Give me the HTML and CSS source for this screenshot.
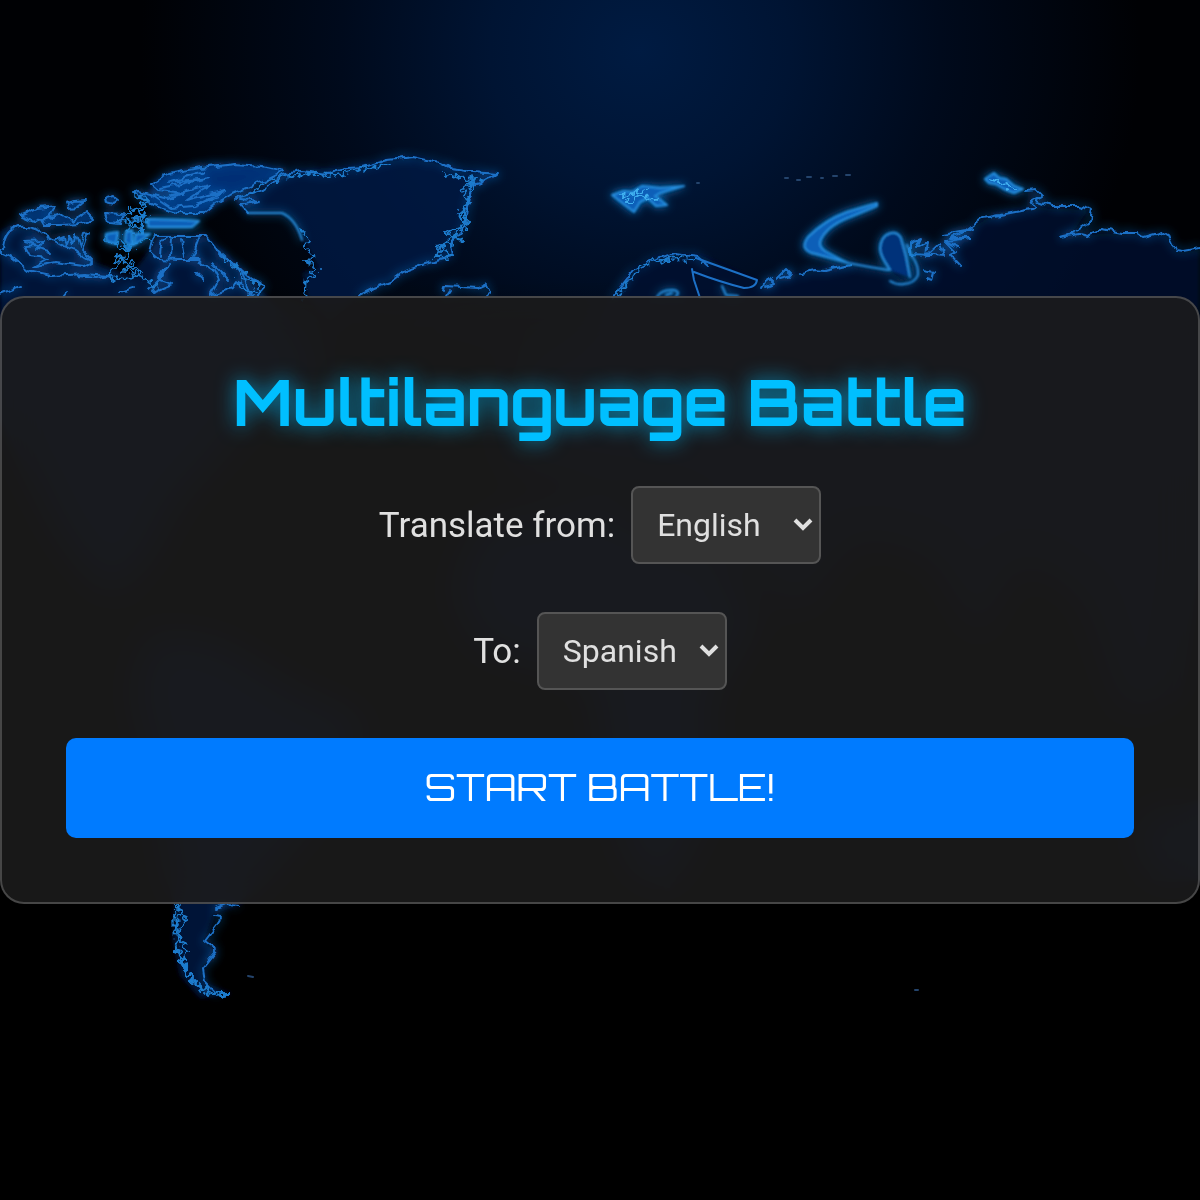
FILE: index.html
```
<!DOCTYPE html>
<html lang="en">

<head>
    <meta charset="UTF-8">
    <meta name="viewport" content="width=device-width, initial-scale=1.0">
    <title>Multilanguage Battle</title>
    <link rel="stylesheet" href="styles.css">
</head>

<body>
<svg class="map" viewBox="0 0 1200 1200" preserveAspectRatio="xMidYMid slice" aria-hidden="true">
    <defs>
        <radialGradient id="sky" gradientUnits="userSpaceOnUse" cx="0" cy="0" r="1" gradientTransform="translate(640 50) scale(500 470)">
            <stop offset="0" stop-color="#001b42"/>
            <stop offset=".3" stop-color="#001433"/>
            <stop offset=".6" stop-color="#000a1c"/>
            <stop offset="1" stop-color="#000104"/>
        </radialGradient>
        <linearGradient id="fade" x1="0" y1="0" x2="0" y2="1">
            <stop offset=".5" stop-color="#000" stop-opacity="0"/>
            <stop offset=".9" stop-color="#000"/>
        </linearGradient>
        <filter id="coast" x="-5%" y="-10%" width="110%" height="120%">
            <feTurbulence type="fractalNoise" baseFrequency=".13" numOctaves="1" seed="4" result="noise"/>
            <feDisplacementMap in="SourceGraphic" in2="noise" scale="8" xChannelSelector="R" yChannelSelector="G" result="moved"/>
            <feGaussianBlur in="moved" stdDeviation=".6" result="line"/>
            <feGaussianBlur in="moved" stdDeviation="5" result="glow"/>
            <feMerge><feMergeNode in="glow"/><feMergeNode in="line"/></feMerge>
        </filter>
        <filter id="rough" x="-10%" y="-20%" width="120%" height="140%">
            <feTurbulence type="fractalNoise" baseFrequency=".2" numOctaves="1" seed="9" result="noise"/>
            <feDisplacementMap in="SourceGraphic" in2="noise" scale="16" xChannelSelector="R" yChannelSelector="G" result="moved"/>
            <feGaussianBlur in="moved" stdDeviation=".6"/>
        </filter>
        <filter id="glow" x="-10%" y="-20%" width="120%" height="140%">
            <feGaussianBlur in="SourceGraphic" stdDeviation="5" result="b"/>
            <feGaussianBlur in="SourceGraphic" stdDeviation=".8" result="line"/>
            <feMerge><feMergeNode in="b"/><feMergeNode in="line"/></feMerge>
        </filter>
        <filter id="soft">
            <feGaussianBlur stdDeviation="2"/>
        </filter>
    </defs>
    <rect width="1200" height="1200" fill="url(#sky)"/>
    <rect width="1200" height="560" y="0" fill="url(#fade)"/>
    <rect width="1200" height="640" y="560" fill="#000"/>

    <!-- land -->
    <g class="land" filter="url(#soft)">
        <path d="M0 232L12 226L34 229L52 242L74 240L88 253L92 262L130 276L150 250L160 236L206 236L230 258L262 292L300 330L330 380L250 420L210 470L180 500L150 560L110 600L60 540L30 480L0 420V262Z"/>
        <path d="M151 184L168 174L200 168L235 164L262 166L284 171L246 188L215 204L204 213L176 213L150 203Z"/>
        <path d="M237 198L263 190L283 175L300 171L347 168L387 160L413 157L440 163L452 169L497 174L472 185L467 207L463 227L450 243L452 257L403 272L390 282L358 296L330 320L307 296L303 273L318 267L302 237L293 220L282 213L248 213L242 207Z"/>
        <path d="M150 630L220 640L300 690L370 720L330 800L290 850L240 904L215 912L205 942L217 950L203 968L208 985L232 994L200 998L180 975L173 940L174 904L150 760L130 690Z"/>
        <path class="deep" d="M614 296L632 270L660 255L700 255L757 280L762 284L800 273L848 263L888 269L905 282L914 262L956 236L1000 212L1035 208L1088 210L1070 236L1140 232L1168 235L1178 252L1200 250V560L1180 700L1120 720L1080 600L1020 560L980 650L930 560L860 540L800 620L740 560L700 560L690 500L620 490L500 470L520 360L580 340Z"/>
        <path d="M480 520L600 500L720 560L760 620L710 700L720 790L670 890L630 870L600 760L590 680L480 650L450 590Z"/>
        <path d="M1130 820L1200 800V880H1150Z"/>
    </g>

    <!-- coastlines -->
    <g class="coast" filter="url(#coast)">
        <path d="M3 250Q4 232 16 227Q35 225 46 236Q60 246 76 251Q84 258 92 262L84 266L55 262L32 267L48 258L30 256L25 246L38 245L24 241L44 240L36 249L50 252"/>
        <path d="M0 252L12 258L28 271L52 276L84 274L110 276L96 278L78 276"/>
        <path d="M56 240L64 237L66 245L70 236L73 246L76 235L80 247L84 233L88 232L82 250L92 260"/>
        <path class="isle" d="M20 216L38 208L56 206L50 216L34 222ZM42 220L60 214L72 222L86 212L94 220L80 224L60 225L45 225Z"/>
        <path class="isle" d="M66 203L74 201L86 200L78 207L68 208ZM105 197L112 195L119 200L114 204L106 202ZM105 213L124 214L120 223L108 222Z"/>
        <path class="isle" d="M151 184L168 174L200 168L235 164L262 166L284 171L268 179L246 188L232 194L215 204L204 213L176 213L162 209L150 203L134 193L138 191L168 199L184 193L158 190Z"/>
        <path d="M160 188L210 178L168 182L205 171M172 195L210 185L186 200L226 190L194 206L218 197M152 196L170 208L194 206"/>
        <path d="M154 236L190 236L206 236L217 250L230 261L252 280L265 286L256 296L236 282L232 288L210 296L219 280L214 270L198 260L178 260L158 259L150 252Z"/>
        <path d="M166 237L161 244L160 256M172 238L171 258M181 240L184 257M199 238L192 258M220 254L242 272L250 294M212 264L228 280M168 264L160 280L150 290M165 267L158 279L172 284L153 292"/>
        <path d="M0 294L20 286M62 296L66 291M120 292L132 288M196 273L204 280"/>
        <path d="M237 198L263 190L283 175L300 171L327 174L347 168L363 167L387 160L413 157L440 163L452 169L472 172L497 174L480 183L472 185L467 207L465 227L450 243L452 257L425 264L403 272L390 282L374 288L358 296"/>
        <path d="M240 199L260 201L240 205L247 213"/>
        <path d="M444 291L445 286L478 288L487 284L490 293L484 298M446 296L450 290"/>
        <path d="M614 298L622 285L634 270L652 260L676 254L698 257L708 266"/>
        <path d="M762 288L768 278L774 284L766 287M780 278L792 275L786 269L776 279M800 273L815 270L824 271L850 265"/>
        <path d="M1025 191L1036 190L1042 196L1032 201L1036 208L1000 215L982 218L966 230L943 234L972 229L948 238L972 238L945 241L958 247"/>
        <path d="M1036 201L1050 206L1078 206L1092 210L1090 222L1072 234L1060 237L1080 234L1088 236L1102 229L1122 233L1138 233L1144 237L1162 232L1170 237L1176 250L1184 251L1200 248"/>
        <path d="M910 243L920 239L916 248L928 242L926 256L940 243L944 256L932 255L910 254ZM946 242L956 252L950 255L960 266M924 270L934 272L932 280L926 278"/>
        <path d="M216 908L226 904L240 905M214 916L222 917L217 925L205 941L217 950L203 968L205 982L216 994"/>
    </g>

    <!-- broken fjord lines -->
    <g class="fjords" filter="url(#rough)">
        <path d="M300 228L308 240L304 246L314 254L307 262L318 270L306 279L304 298"/>
        <path d="M472 180L470 195L464 212L464 228L450 238L442 248L436 256L452 258"/>
        <path d="M474 182L462 190L470 202L458 213L468 224L446 233L462 239L436 246L452 257"/>
        <path d="M444 172L462 179L480 178L466 184M252 192L266 182L282 178L300 174L330 176L360 169L390 164"/>
        <path d="M105 240L118 236L128 248L142 238L150 240M128 210L129 250M142 204L142 242M120 220L152 222M118 254L132 270L144 278L158 290"/>
        <path d="M112 240L120 250L132 250L118 262L108 276L124 280L140 272L130 262L122 272"/>
        <path d="M135 195L150 202L132 210L148 216L128 222L144 230L126 236"/>
        <path d="M222 258L236 266L244 278L262 286L250 294L236 282"/>
        <path d="M617 296L630 280L640 266L660 260L680 258L700 260"/>
        <path d="M177 904L184 920L177 940L181 962L192 982L210 994L230 994M182 904L176 930L186 950L184 970L202 988L222 996"/>
        <path d="M175 905L176 950L190 976L204 994"/>
    </g>

    <!-- islands -->
    <g class="bright" filter="url(#glow)">
        <path class="lit" d="M612 195L624 191L632 192L642 186L660 188L684 186L660 193L655 196L667 205L656 206L648 198L640 202L634 212Z"/>
        <path class="lit" d="M877 203L847 212Q825 220 808 237Q803 244 805 248Q808 253 816 254L848 263Q834 256 825 251Q819 247 820 242Q822 235 830 228Q839 221 850 217L877 206Z"/>
        <path d="M848 263L870 267L888 270"/>
        <path class="dim" d="M890 270L885 262Q880 254 880 248Q881 237 888 234Q897 230 901 238L906 256L910 277"/>
        <path d="M907 245L912 256Q919 266 918 275Q915 283 904 284Q896 285 890 281"/>
        <path class="lit" d="M985 179L994 173L999 178L1006 179L1014 186L1023 189L1014 193L1004 189L996 184L989 183Z"/>
        <path class="lit" d="M148 219L182 220L199 221L192 227L148 227ZM106 234L118 232L116 244L106 241ZM126 232L132 230V246L125 242ZM136 234L150 234L134 245Z"/>
        <path d="M657 297Q661 289 674 290Q681 292 676 296M666 295L672 293M722 286L726 295L738 296"/>
        <path d="M248 213H282Q296 219 302 240"/>
    </g>
    <g class="coast">
        <path d="M696 258L757 280Q756 288 744 288Q720 282 694 272M692 269L694 280L700 298"/>
    </g>
    <g class="inlets" filter="url(#rough)">
        <path d="M620 195L634 194L646 190M628 202L640 196L656 200M990 179L1004 184L1016 190"/>
    </g>
    <g class="specks">
        <path d="M785 178h3M797 180h3M807 177h4M821 178h2M833 176h4M846 175h4M697 183h2M248 976l5 1M915 990h3"/>
    </g>
</svg>

<main class="container">
    <h1 class="title">Multilanguage Battle</h1>
    <form class="setup">
        <div class="field">
            <label for="from">Translate from:</label>
            <span class="select-wrapper">
                <select id="from">
                    <option>English</option>
                    <option>Spanish</option>
                </select>
                <svg class="arrow" viewBox="0 0 20 14" aria-hidden="true"><path d="M2 3L10 11L18 3"/></svg>
            </span>
        </div>
        <div class="field">
            <label for="to">To:</label>
            <span class="select-wrapper">
                <select id="to">
                    <option>Spanish</option>
                    <option>English</option>
                </select>
                <svg class="arrow" viewBox="0 0 20 14" aria-hidden="true"><path d="M2 3L10 11L18 3"/></svg>
            </span>
        </div>
        <button class="start" type="button">START BATTLE!</button>
    </form>
</main>
</body>

</html>
```
FILE: styles.css
```
* {
    box-sizing: border-box;
}

body {
    margin: 0;
    min-height: 100vh;
    display: flex;
    align-items: center;
    justify-content: center;
    background-color: #000;
    color: #e0e0e0;
    font-family: Roboto, sans-serif;
}

.map {
    position: fixed;
    top: 0;
    left: 0;
    width: 100%;
    height: 100%;
    fill: none;
    stroke-linejoin: round;
    stroke-linecap: round;
}

.land {
    fill: #001544;
    fill-opacity: .8;
}

.land .deep {
    fill: #001030;
}

.coast {
    stroke: #1c70c6;
    stroke-width: 2;
}

.coast .isle {
    fill: #08398a;
    fill-opacity: .5;
}

.fjords {
    stroke: #1f7ccd;
    stroke-width: 2;
}

.bright {
    stroke: #2590e0;
    stroke-width: 2;
}

.bright .lit {
    fill: #0a5fb8;
}

.bright .dim {
    fill: #04307a;
}

.inlets {
    stroke: #3fb0f0;
    stroke-width: 2;
}

.specks {
    stroke: #24446c;
    stroke-width: 2;
}

.container {
    position: relative;
    width: 100%;
    padding: 64px;
    text-align: center;
    background-color: rgba(28, 28, 27, .87);
    border: 2px solid rgba(255, 255, 255, .2);
    border-radius: 24px;
    backdrop-filter: blur(20px);
}

.title {
    margin: 0 0 44px;
    color: #00bfff;
    font-family: Orbitron, "DejaVu Sans", sans-serif;
    font-size: 64px;
    line-height: 80px;
    font-weight: bold;
    text-shadow: 0 0 20px rgba(0, 191, 255, .7);
}

.setup {
    display: flex;
    flex-direction: column;
    gap: 48px;
}

.field {
    display: flex;
    flex-wrap: wrap;
    align-items: center;
    justify-content: center;
    gap: 16px;
    font-size: 35px;
}

.select-wrapper {
    position: relative;
}

select {
    display: block;
    width: 190px;
    height: 78px;
    padding: 0 24px;
    appearance: none;
    background-color: #333;
    color: #e0e0e0;
    border: 2px solid #555;
    border-radius: 8px;
    font-family: inherit;
    font-size: 32px;
}

.arrow {
    position: absolute;
    top: 31px;
    right: 8px;
    width: 20px;
    height: 14px;
    fill: none;
    stroke: #e0e0e0;
    stroke-width: 4;
    pointer-events: none;
}

.start {
    width: 100%;
    padding: 25px 32px 27px;
    background-color: #007bff;
    color: #fff;
    border: none;
    border-radius: 10px;
    font-family: Orbitron, "DejaVu Sans", sans-serif;
    font-size: 38px;
    line-height: 48px;
    font-weight: 400;
    cursor: pointer;
}
```
